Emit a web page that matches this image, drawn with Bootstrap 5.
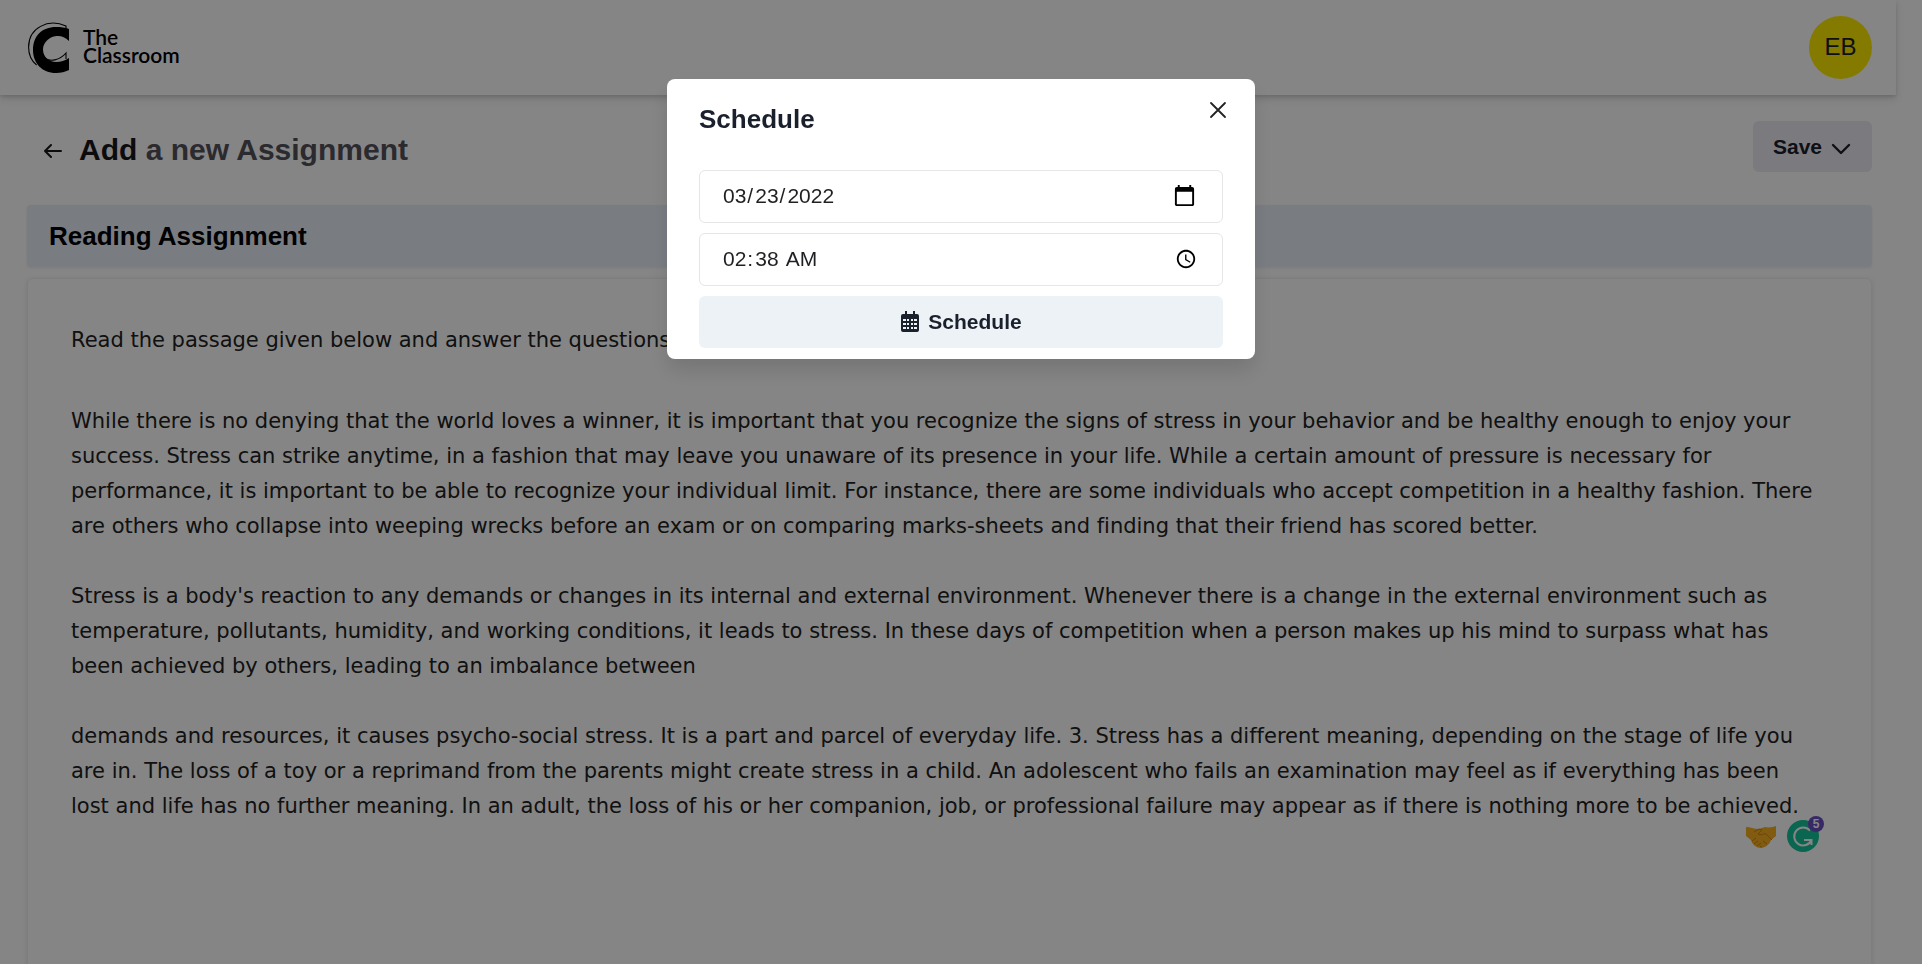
<!DOCTYPE html>
<html lang="en">
<head>
<meta charset="utf-8">
<meta name="viewport" content="width=device-width, initial-scale=1">
<title>The Classroom - Add a new Assignment</title>
<link href="https://cdn.jsdelivr.net/npm/bootstrap@5.3.0/dist/css/bootstrap.min.css" rel="stylesheet">
<style>
  body { font-family: "Liberation Sans", Arial, sans-serif; color: #1a202c; background: #fff; }
  .app-shell { padding-right: 26px; }
  .topbar { height: 95px; padding: 0 24px 0 28px; box-shadow: 0 4px 8px rgba(0,0,0,.12), 0 2px 3px rgba(0,0,0,.1); }
  .brand { gap: 13px; }
  .brand-name { font-family: Lato, sans-serif; font-weight: 600; font-size: 21px; line-height: 18px; padding-bottom: 3px; color: #000; }
  .avatar { width: 63px; height: 63px; font-size: 24px; line-height: 28px; padding-bottom: 2px; background: #ffea00; color: #1a202c; }
  .content-area { padding: 26px 24px 0 27px; }
  .page-title { font-size: 30px; line-height: 36px; color: #52525b; }
  .page-title span { color: #18181b; }
  .back-title { padding-top: 6px; }
  .soft-btn { background: #edf2f7; color: #1a202c; font-size: 21px; font-weight: 700; height: 52px; border: 0; border-radius: 6px; }
  .soft-btn:hover { background: #e2e8f0; }
  .save-btn { background: #ecebf4; width: 119px; height: 51px; }
  .section-title { font-size: 26px; line-height: 30px; padding: 16px 22px; margin-top: 33px; background: #e9effa; color: #000; border-radius: 4px; box-shadow: 0 1px 3px rgba(0,0,0,.08); }
  .editor { margin-top: 11px; min-height: 100vh; padding: 44px 48px 44px 43px; border: 1px solid #f1f1f1; border-radius: 6px; box-shadow: 0 1px 5px rgba(0,0,0,.1); font-family: "DejaVu Sans", sans-serif; font-size: 21px; line-height: 35px; font-variant-ligatures: none; color: #212121; }
  .editor p { margin-bottom: 35px; }
  .editor p.lead-in { margin-bottom: 46px; }
  .assist { right: -2px; bottom: -30px; }
  .modal-backdrop { --bs-backdrop-opacity: .48; }
  .schedule-dialog { --bs-modal-width: 588px; margin-top: 79px; }
  .schedule-dialog .modal-content { border: 0; border-radius: 8px; box-shadow: 0 12px 20px rgba(0,0,0,.12); }
  .schedule-dialog .modal-header { padding: 22px 28px 33px 32px; border: 0; }
  .schedule-dialog .modal-title { font-size: 26px; line-height: 36px; font-weight: 700; }
  .schedule-dialog .modal-body { padding: 0 32px 11px; gap: 10px; }
  .schedule-dialog .form-control { height: 53px; padding: 0 21px 1px; font-size: 21px; color: #1f2023; border: 1px solid #e5e6e8; border-radius: 6px; }
  .form-control::-webkit-datetime-edit { padding-bottom: 1px; }
  .form-control::-webkit-datetime-edit-month-field,
  .form-control::-webkit-datetime-edit-day-field,
  .form-control::-webkit-datetime-edit-year-field,
  .form-control::-webkit-datetime-edit-hour-field,
  .form-control::-webkit-datetime-edit-minute-field,
  .form-control::-webkit-datetime-edit-ampm-field { padding: 0 1px 0 2px; }
  .form-control[type="date"]::-webkit-calendar-picker-indicator { width: 25px; height: 25px; margin-right: 4px; padding: 0; }
  .form-control[type="time"]::-webkit-calendar-picker-indicator { margin-right: 1px; }
</style>
</head>
<body class="modal-open overflow-hidden">
<div class="app-shell vh-100 overflow-hidden">
  <header class="topbar d-flex align-items-center justify-content-between">
    <a href="#" class="brand d-flex align-items-center text-decoration-none">
      <svg width="42" height="52" viewBox="0 0 42 52" aria-hidden="true">
        <path d="M38 8V4C20-4 .6 6 .6 25c0 8 3 14 8 18M15 35c7 6 17 3 23-4v6" fill="none" stroke="#000" stroke-width="1.1"/>
        <path d="M41 7v12c-4-4-8-5.500-12.500-5C20.500 15 15 21 15 27.500 15 35 21 40 28 40c5 0 9-1.500 13-4v12c-4 2-8 3-13 3C14 51 5 41 5 28 5 14 14 5 28 5c5 0 9 .5 13 2Z" fill="#000"/>
      </svg>
      <span class="brand-name">The<br>Classroom</span>
    </a>
    <div class="avatar rounded-circle d-flex align-items-center justify-content-center">EB</div>
  </header>

  <main class="content-area">
    <div class="d-flex align-items-center justify-content-between">
      <div class="back-title d-flex align-items-center">
        <a href="#" aria-label="Back" class="d-flex px-3">
          <svg width="20" height="16" viewBox="0 0 20 16" fill="none" stroke="#18181b" stroke-width="2" stroke-linecap="round" stroke-linejoin="round"><path d="M18 9H2M8 3 2 9l6 6"/></svg>
        </a>
        <h1 class="page-title fw-bold mb-0"><span>Add</span> a new Assignment</h1>
      </div>
      <button type="button" class="soft-btn save-btn d-flex align-items-center justify-content-center gap-2">Save
        <svg width="22" height="22" viewBox="0 0 22 22" fill="none" stroke="currentColor" stroke-width="2.4" stroke-linecap="round" stroke-linejoin="round"><path d="m3 9 8 8 8-8"/></svg>
      </button>
    </div>

    <h2 class="section-title fw-bold mb-0">Reading Assignment</h2>

    <section class="editor">
      <p class="lead-in">Read the passage given below and answer the questions</p>
      <p>While there is no denying that the world loves a winner, it is important that you recognize the signs of stress in your behavior and be healthy enough to enjoy your success. Stress can strike anytime, in a fashion that may leave you unaware of its presence in your life. While a certain amount of pressure is necessary for performance, it is important to be able to recognize your individual limit. For instance, there are some individuals who accept competition in a healthy fashion. There are others who collapse into weeping wrecks before an exam or on comparing marks-sheets and finding that their friend has scored better.</p>
      <p>Stress is a body's reaction to any demands or changes in its internal and external environment. Whenever there is a change in the external environment such as temperature, pollutants, humidity, and working conditions, it leads to stress. In these days of competition when a person makes up his mind to surpass what has been achieved by others, leading to an imbalance between</p>
      <div class="position-relative">
        <p class="mb-0">demands and resources, it causes psycho-social stress. It is a part and parcel of everyday life. 3. Stress has a different meaning, depending on the stage of life you are in. The loss of a toy or a reprimand from the parents might create stress in a child. An adolescent who fails an examination may feel as if everything has been lost and life has no further meaning. In an adult, the loss of his or her companion, job, or professional failure may appear as if there is nothing more to be achieved.</p>
        <svg class="assist position-absolute" width="80" height="38" viewBox="0 0 80 38" aria-label="Writing suggestions">
          <path d="M1 11c4 0 8 2 13 2l6-2c4 1 8 0 11-1v10l-5 4c-1 4-6 8-10 8-5 0-9-4-10-8l-5-4Z" fill="#f7ae1f"/>
          <path d="M9 16l5-3 3 1-4 4c3 2 6-1 8 0l6 6M7 25l4-3M9 28l4-3M12 30l4-3M17 31l-2-1M22 28l-4-3" fill="none" stroke="#cf8415" stroke-width="1"/>
          <circle cx="58" cy="20" r="16" fill="#15c39a"/>
          <path d="M65 14.500a9 9 0 1 0 1.500 9.500M59 24h7.500v5" fill="none" stroke="#fff" stroke-width="2"/>
          <circle cx="71" cy="8" r="8" fill="#6a4fc4"/>
          <text x="71" y="12" text-anchor="middle" font-family="Liberation Sans, sans-serif" font-weight="700" font-size="12" fill="#fff">5</text>
        </svg>
      </div>
    </section>
  </main>
</div>

<div class="modal-backdrop show"></div>
<div class="modal show d-block" tabindex="-1" role="dialog" aria-modal="true" aria-labelledby="scheduleTitle">
  <div class="modal-dialog schedule-dialog">
    <form class="modal-content">
      <div class="modal-header align-items-start">
        <h2 class="modal-title" id="scheduleTitle">Schedule</h2>
        <button type="button" class="btn p-0 border-0 d-flex" aria-label="Close">
          <svg width="18" height="18" viewBox="0 0 18 18" fill="none" stroke="#222" stroke-width="1.8" stroke-linecap="round"><path d="m2 2 14 14M16 2 2 16"/></svg>
        </button>
      </div>
      <div class="modal-body d-flex flex-column">
        <input type="date" aria-label="Date" class="form-control" value="2022-03-23">
        <input type="time" aria-label="Time" class="form-control" value="02:38">
        <button type="button" class="soft-btn d-flex align-items-center justify-content-center gap-2">
          <svg width="20" height="22" viewBox="0 0 20 22" fill="currentColor" aria-hidden="true">
            <path fill-rule="evenodd" d="M5 0h2v3h6V0h2v3h2a2 2 0 0 1 2 2v14a2 2 0 0 1-2 2H3a2 2 0 0 1-2-2V5a2 2 0 0 1 2-2h2ZM3 8v2h3V8ZM7 8v2h2V8ZM11 8v2h2V8ZM14 8v2h3V8ZM3 12v2h3v-2ZM7 12v2h2v-2ZM11 12v2h2v-2ZM14 12v2h3v-2ZM3 16v2h3v-2ZM7 16v2h2v-2ZM11 16v2h2v-2ZM14 16v2h3v-2Z"/>
          </svg>
          Schedule</button>
      </div>
    </form>
  </div>
</div>
<script src="https://cdn.jsdelivr.net/npm/bootstrap@5.3.0/dist/js/bootstrap.bundle.min.js"></script>
</body>
</html>
